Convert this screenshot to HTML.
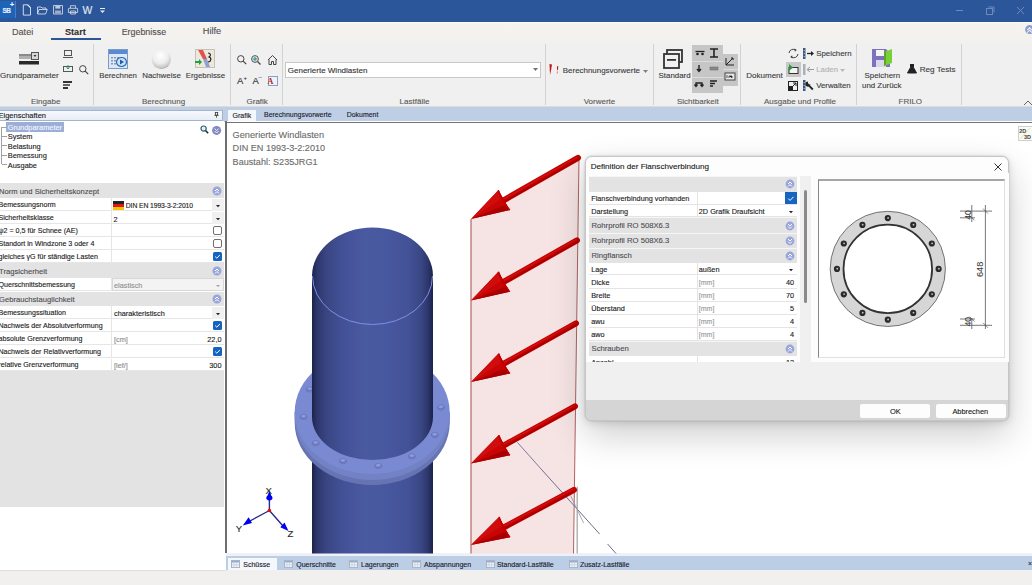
<!DOCTYPE html>
<html><head><meta charset="utf-8"><style>
html,body{margin:0;padding:0;width:1032px;height:585px;overflow:hidden;background:#fff;}
body{position:relative;font-family:"Liberation Sans",sans-serif;}
.t{position:absolute;white-space:nowrap;-webkit-text-stroke:0.12px currentColor;}
.r{position:absolute;}
.s{position:absolute;overflow:visible;}
</style></head><body>
<div class="r" style="left:0px;top:0px;width:1032px;height:22px;background:#2b579a;"></div>
<div class="r" style="left:0px;top:22px;width:1032px;height:1px;background:#fafafa;"></div>
<div class="r" style="left:0px;top:1px;width:16px;height:17px;background:#1f63b9;border-right:1px solid #4a7fc8;box-sizing:border-box;"></div>
<div class="t" style="left:2.50px;top:7.70px;font-size:6.5px;line-height:6.5px;color:#e8f0ff;font-weight:bold;letter-spacing:-0.5px;">SB</div>
<div class="t" style="left:10.00px;top:1.27px;font-size:7px;line-height:7px;color:#ffffff;font-weight:bold;">+</div>
<svg class="s" style="left:22px;top:4px;" width="10" height="12" viewBox="0 0 10 12"><path d="M1.3 0.8h4.6l2.6 2.6v7.7h-7.2z" fill="none" stroke="#dfe6f2" stroke-width="0.9"/><path d="M5.6 0.8l3 3" stroke="#dfe6f2" stroke-width="1.2"/></svg>
<svg class="s" style="left:37px;top:6px;" width="11" height="9" viewBox="0 0 11 9"><path d="M0.5 1h3.5l1 1h4v1.5 M0.5 1v7h8l1.8-4.5h-8.3l-1.5 4.5" fill="none" stroke="#d2d9e6" stroke-width="0.9"/></svg>
<svg class="s" style="left:52.5px;top:5px;" width="10" height="9.5" viewBox="0 0 10 9.5"><path d="M0.5 0.5h9v8.5h-9z" fill="none" stroke="#c8d0de" stroke-width="0.9"/><rect x="2.3" y="1" width="5" height="2.6" fill="#c0c8d8"/><rect x="2" y="5.5" width="6" height="3.2" fill="#a0acc4"/></svg>
<svg class="s" style="left:67.5px;top:5px;" width="10" height="9.5" viewBox="0 0 10 9.5"><path d="M2.5 3.3v-2.6h5v2.6 M1 3.3h8a0.6 0.6 0 0 1 0.6 0.6v3.6h-9.2v-3.6a0.6 0.6 0 0 1 0.6-0.6z M2.5 6h5v3h-5z" fill="none" stroke="#c8d0de" stroke-width="0.9"/></svg>
<div class="t" style="left:82.60px;top:6.00px;font-size:10.4px;line-height:10.4px;color:#e4e9f2;">W</div>
<svg class="s" style="left:100px;top:8px;" width="6" height="6" viewBox="0 0 6 6"><rect x="0" y="0" width="5" height="1" fill="#e6ecf6"/><path d="M0 2.5h5l-2.5 2.5z" fill="#e6ecf6"/></svg>
<div class="r" style="left:956px;top:10px;width:7px;height:1px;background:#6d8abb;"></div>
<svg class="s" style="left:985px;top:6px;" width="10" height="9" viewBox="0 0 10 9"><rect x="1.5" y="2.5" width="6" height="6" fill="none" stroke="#6d8abb"/><path d="M3.5 1h5.5v5.5" fill="none" stroke="#6d8abb"/></svg>
<svg class="s" style="left:1016px;top:6px;" width="9" height="9" viewBox="0 0 9 9"><path d="M1 1l7 7M8 1l-7 7" stroke="#6d8abb" stroke-width="1"/></svg>
<div class="r" style="left:0px;top:23px;width:1032px;height:22px;background:linear-gradient(#f5f3f0 0,#f4f2ef 70%,#f0f0f0 100%);"></div>
<div class="t" style="left:12.00px;top:27.50px;font-size:9.1px;line-height:9.1px;color:#505050;">Datei</div>
<div class="t" style="left:65.00px;top:27.50px;font-size:9.1px;line-height:9.1px;color:#303030;font-weight:bold;">Start</div>
<div class="r" style="left:51px;top:38.4px;width:50px;height:2px;background:#2b579a;"></div>
<div class="t" style="left:121.70px;top:27.67px;font-size:8.9px;line-height:8.9px;color:#505050;">Ergebnisse</div>
<div class="t" style="left:202.80px;top:27.41px;font-size:9.2px;line-height:9.2px;color:#505050;">Hilfe</div>
<svg class="s" style="left:1024.5px;top:25px;" width="10" height="10" viewBox="0 0 10 10"><circle cx="4.6" cy="4.6" r="4.5" fill="#8e9ccc"/><path d="M2.2 5.2l2.4-2.4 2.4 2.4M2.2 7.6l2.4-2.4 2.4 2.4" fill="none" stroke="#eef0fa" stroke-width="1.1"/></svg>
<div class="r" style="left:0px;top:45px;width:1032px;height:62px;background:#f0f0f0;"></div>
<div class="r" style="left:0px;top:106px;width:1032px;height:1px;background:#dcdcdc;"></div>
<div class="r" style="left:93px;top:44px;width:1px;height:61px;background:#d2d2d2;"></div>
<div class="r" style="left:230px;top:44px;width:1px;height:61px;background:#d2d2d2;"></div>
<div class="r" style="left:282px;top:44px;width:1px;height:61px;background:#d2d2d2;"></div>
<div class="r" style="left:545px;top:44px;width:1px;height:61px;background:#d2d2d2;"></div>
<div class="r" style="left:653px;top:44px;width:1px;height:61px;background:#d2d2d2;"></div>
<div class="r" style="left:740px;top:44px;width:1px;height:61px;background:#d2d2d2;"></div>
<div class="r" style="left:856px;top:44px;width:1px;height:61px;background:#d2d2d2;"></div>
<div class="r" style="left:961px;top:44px;width:1px;height:61px;background:#d2d2d2;"></div>
<div class="t" style="left:31.00px;top:98.23px;font-size:8px;line-height:8px;color:#5a5a5a;">Eingabe</div>
<div class="t" style="left:142.00px;top:98.23px;font-size:8px;line-height:8px;color:#5a5a5a;">Berechnung</div>
<div class="t" style="left:246.50px;top:98.23px;font-size:8px;line-height:8px;color:#5a5a5a;">Grafik</div>
<div class="t" style="left:399.60px;top:98.23px;font-size:8px;line-height:8px;color:#5a5a5a;">Lastfälle</div>
<div class="t" style="left:583.70px;top:98.23px;font-size:8px;line-height:8px;color:#5a5a5a;">Vorwerte</div>
<div class="t" style="left:677.00px;top:98.23px;font-size:8px;line-height:8px;color:#5a5a5a;">Sichtbarkeit</div>
<div class="t" style="left:764.00px;top:98.23px;font-size:8px;line-height:8px;color:#5a5a5a;">Ausgabe und Profile</div>
<div class="t" style="left:898.50px;top:98.23px;font-size:8px;line-height:8px;color:#5a5a5a;">FRILO</div>
<svg class="s" style="left:19px;top:52px;" width="21" height="14" viewBox="0 0 21 14"><rect x="0" y="2" width="15" height="5" fill="#8a8a8a"/><rect x="0" y="4" width="15" height="3" fill="#b0b0b0"/><rect x="0" y="9" width="20" height="3.5" fill="#2a2a2a"/><rect x="12.5" y="0.5" width="7" height="7" fill="#d8d8d8" stroke="#555"/><path d="M14.5 3h3l-1.5 2z" fill="#333"/></svg>
<div class="t" style="left:0.00px;top:71.83px;font-size:8px;line-height:8px;color:#3c3c3c;">Grundparameter</div>
<svg class="s" style="left:63px;top:50px;" width="10" height="8" viewBox="0 0 10 8"><rect x="1.5" y="0.5" width="7" height="5" fill="none" stroke="#555"/><path d="M0 7.5h10" stroke="#555"/></svg>
<svg class="s" style="left:63px;top:65px;" width="10" height="7" viewBox="0 0 10 7"><rect x="0.5" y="1.5" width="9" height="5" fill="none" stroke="#555"/><path d="M5 0v4M3.5 2.5l1.5 1.5 1.5-1.5" stroke="#1a9a8a" fill="none"/></svg>
<svg class="s" style="left:63px;top:81px;" width="10" height="9" viewBox="0 0 10 9"><rect x="0" y="0" width="9" height="2" fill="#333"/><rect x="0" y="3" width="7" height="2" fill="#666"/><rect x="0" y="6" width="5" height="2" fill="#333"/></svg>
<svg class="s" style="left:79px;top:65px;" width="10" height="10" viewBox="0 0 10 10"><circle cx="3.8" cy="3.8" r="3.2" fill="none" stroke="#444" stroke-width="1"/><path d="M6.2 6.2l3 3" stroke="#444" stroke-width="1.2"/></svg>
<svg class="s" style="left:108px;top:49px;" width="21" height="20" viewBox="0 0 21 20"><rect x="0.5" y="0.5" width="19" height="19" fill="#dde8f6" stroke="#7a9ac8"/><rect x="1" y="1" width="18" height="4" fill="#5a8ad0"/><g fill="#8898b0"><rect x="3" y="8" width="2" height="1.5"/><rect x="6" y="8" width="2" height="1.5"/><rect x="9" y="8" width="2" height="1.5"/><rect x="3" y="11" width="2" height="1.5"/><rect x="6" y="11" width="2" height="1.5"/><rect x="3" y="14" width="2" height="1.5"/><rect x="6" y="14" width="2" height="1.5"/></g><ellipse cx="13.5" cy="13" rx="5" ry="4.5" fill="#cfe0f4" stroke="#2a6ab8" stroke-width="1.2"/><path d="M12 10.5v5l4-2.5z" fill="#1a5ab0"/></svg>
<div class="t" style="left:99.20px;top:71.90px;font-size:7.8px;line-height:7.8px;color:#3c3c3c;">Berechnen</div>
<svg class="s" style="left:151px;top:50px;" width="21" height="19" viewBox="0 0 21 19"><defs><radialGradient id="sph" cx="0.45" cy="0.3" r="0.75"><stop offset="0" stop-color="#ffffff"/><stop offset="0.55" stop-color="#ececec"/><stop offset="0.85" stop-color="#c4c4c4"/><stop offset="1" stop-color="#888"/></radialGradient></defs><circle cx="10.3" cy="9.5" r="9.6" fill="url(#sph)"/></svg>
<div class="t" style="left:142.20px;top:71.81px;font-size:7.9px;line-height:7.9px;color:#3c3c3c;">Nachweise</div>
<svg class="s" style="left:195px;top:49px;" width="21" height="20" viewBox="0 0 21 20"><rect x="0.5" y="0.5" width="19" height="18" fill="#ece8dc" stroke="#c8c0b0"/><path d="M3 1l5 0l4 9l-4 0z" fill="#e05050"/><path d="M8 10l4 0l3 8l-4 0z" fill="#8aa4d0"/><path d="M13 4c3 0 3 3 1 4c3 1 2 5-1 5" fill="none" stroke="#222" stroke-width="1.2"/><path d="M0 12h4v-2l3 3-3 3v-2h-4z" fill="#20a040"/></svg>
<div class="t" style="left:185.70px;top:71.81px;font-size:7.9px;line-height:7.9px;color:#3c3c3c;">Ergebnisse</div>
<svg class="s" style="left:237px;top:55px;" width="10" height="10" viewBox="0 0 10 10"><circle cx="3.8" cy="3.8" r="3.2" fill="none" stroke="#444"/><path d="M6.2 6.2l3 3" stroke="#444" stroke-width="1.2"/></svg>
<svg class="s" style="left:251px;top:55px;" width="11" height="10" viewBox="0 0 11 10"><circle cx="4" cy="4" r="3.4" fill="#d8e4e4" stroke="#555"/><path d="M6.5 6.5l3 3" stroke="#444" stroke-width="1.2"/><path d="M4 2v4M2 4h4" stroke="#2a8a8a"/></svg>
<svg class="s" style="left:267px;top:55px;" width="11" height="10" viewBox="0 0 11 10"><path d="M1 5l4.5-4.5 4.5 4.5M2 4.5v5h2.5v-3h2v3h2.5v-5" fill="none" stroke="#444" stroke-width="1"/></svg>
<div class="t" style="left:237.00px;top:76.46px;font-size:9.5px;line-height:9.5px;color:#333;">A</div>
<div class="t" style="left:243.50px;top:74.92px;font-size:6px;line-height:6px;color:#333;">+</div>
<div class="t" style="left:252.50px;top:76.46px;font-size:9.5px;line-height:9.5px;color:#333;">A</div>
<div class="t" style="left:258.50px;top:74.42px;font-size:6px;line-height:6px;color:#333;">–</div>
<svg class="s" style="left:267px;top:76px;" width="11" height="10" viewBox="0 0 11 10"><rect x="1.5" y="0.5" width="9" height="9" fill="#eef2f8" stroke="#8aa0c0"/><text x="0.5" y="8" font-family="Liberation Serif" font-weight="bold" font-size="8" fill="#c02020">A</text></svg>
<div class="r" style="left:285px;top:62px;width:256px;height:16px;background:#ffffff;border:1px solid #c8c8c8;box-sizing:border-box;"></div>
<div class="t" style="left:287.80px;top:66.63px;font-size:8px;line-height:8px;color:#333;">Generierte Windlasten</div>
<svg class="s" style="left:533px;top:68px;" width="6" height="4" viewBox="0 0 6 4"><path d="M0 0h5l-2.5 3z" fill="#707070"/></svg>
<svg class="s" style="left:549px;top:63px;" width="12" height="12" viewBox="0 0 12 12"><path d="M0.5 1l2.5 0.5-0.8 5-1.2 5.5z" fill="#c01818"/><path d="M8 3.5l1.3-0.5-0.3 3.5-1 1z" fill="#c01818"/><path d="M8 8.5l0.6 0-0.3 2-0.5 0z" fill="#c01818"/></svg>
<div class="t" style="left:562.80px;top:66.67px;font-size:7.95px;line-height:7.95px;color:#3c3c3c;">Berechnungsvorwerte</div>
<svg class="s" style="left:643px;top:70px;" width="6" height="4" viewBox="0 0 6 4"><path d="M0 0h5l-2.5 3z" fill="#808080"/></svg>
<svg class="s" style="left:663px;top:49px;" width="22" height="21" viewBox="0 0 22 21"><rect x="4" y="1" width="15" height="12" fill="none" stroke="#333" stroke-width="1.8"/><rect x="1" y="5" width="15" height="14" fill="#f0f0f0" stroke="#333" stroke-width="1.8"/><rect x="4" y="10" width="9" height="1.8" fill="#333"/></svg>
<div class="t" style="left:658.60px;top:71.91px;font-size:7.9px;line-height:7.9px;color:#3c3c3c;">Standard</div>
<div class="r" style="left:692px;top:45px;width:31px;height:48px;background:#c6c6c6;"></div>
<div class="r" style="left:723px;top:54px;width:15px;height:32px;background:#c6c6c6;"></div>
<div class="r" style="left:692px;top:61px;width:31px;height:1px;background:#dcdcdc;"></div>
<div class="r" style="left:692px;top:77px;width:31px;height:1px;background:#dcdcdc;"></div>
<div class="r" style="left:723px;top:69px;width:15px;height:1px;background:#dcdcdc;"></div>
<svg class="s" style="left:692px;top:45px;" width="46" height="48" viewBox="0 0 46 48">
<path d="M3.5 6.5h9" stroke="#222" stroke-width="1.3"/><circle cx="5.5" cy="9" r="1.3" fill="#222"/><circle cx="10.5" cy="9" r="1.3" fill="#222"/>
<path d="M18 4h8M22 4v8M18 12h8" stroke="#222" stroke-width="1.6"/>
<path d="M7 20v6M5 24l2 2.5 2-2.5" fill="none" stroke="#222" stroke-width="1.4"/>
<rect x="18" y="22" width="8" height="3" fill="#888" stroke="#666" stroke-width="0.5"/>
<path d="M4 41v-3h6v3M2.5 39.5l1.5 2 1.5-2M8.5 39.5l1.5 2 1.5-2" fill="none" stroke="#222" stroke-width="1.3"/>
<path d="M18 36h7M18 38.5h5M18 41h3" stroke="#222" stroke-width="1.4"/>
<path d="M34 13v7h8M34 20l7-7M39 13h2v2" fill="none" stroke="#222" stroke-width="1"/>
<rect x="33" y="28" width="10" height="7" fill="#e8e8e8" stroke="#444"/><path d="M35 30v3M37 31h3v2M37 31v2" stroke="#333" stroke-width="0.8"/>
</svg>
<div class="t" style="left:746.30px;top:71.73px;font-size:8px;line-height:8px;color:#3c3c3c;">Dokument</div>
<svg class="s" style="left:788px;top:48px;" width="11" height="11" viewBox="0 0 11 11"><path d="M7.8 2.2A4.2 4.2 0 0 0 1 5M3.2 8.8A4.2 4.2 0 0 0 10 6" fill="none" stroke="#444" stroke-width="1"/><path d="M6.5 0.5l2.3 1.5-2 1.8z" fill="#444"/><path d="M4.5 10.5l-2.3-1.5 2-1.8z" fill="#444"/></svg>
<div class="r" style="left:786px;top:62px;width:15px;height:15px;background:#c8c8c8;"></div>
<svg class="s" style="left:788px;top:64px;" width="11" height="11" viewBox="0 0 11 11"><rect x="1" y="3.5" width="9" height="6" fill="#f4f4f4" stroke="#333"/><path d="M1 0v7l4-3.5z" fill="#2a9a3a"/></svg>
<svg class="s" style="left:788px;top:81px;" width="10" height="10" viewBox="0 0 10 10"><rect x="0.5" y="0.5" width="9" height="9" fill="none" stroke="#222"/><rect x="1" y="5" width="4" height="4" fill="#222"/><path d="M4 6l4-4M5 2h3v3" stroke="#222" fill="none"/></svg>
<svg class="s" style="left:803px;top:48px;" width="12" height="11" viewBox="0 0 12 11"><rect x="0" y="0" width="2.5" height="11" fill="#3a5a7a"/><rect x="0.7" y="2" width="1.1" height="1.1" fill="#a8c0d8"/><rect x="0.7" y="5" width="1.1" height="1.1" fill="#a8c0d8"/><rect x="0.7" y="8" width="1.1" height="1.1" fill="#a8c0d8"/><path d="M4 5.5h5" stroke="#222" stroke-width="1.3"/><path d="M8 3l3 2.5-3 2.5z" fill="#222"/></svg>
<div class="t" style="left:816.20px;top:50.35px;font-size:7.85px;line-height:7.85px;color:#3c3c3c;">Speichern</div>
<svg class="s" style="left:803px;top:64px;" width="12" height="11" viewBox="0 0 12 11"><rect x="0" y="0" width="2.5" height="11" fill="#a8b0b8"/><path d="M5 5.5h6" stroke="#999" stroke-width="1"/><path d="M7 3l-3 2.5 3 2.5" fill="none" stroke="#999"/></svg>
<div class="t" style="left:816.20px;top:66.31px;font-size:7.9px;line-height:7.9px;color:#b4b4b4;">Laden</div>
<svg class="s" style="left:840px;top:69px;" width="6" height="4" viewBox="0 0 6 4"><path d="M0 0h5l-2.5 3z" fill="#b8b8b8"/></svg>
<svg class="s" style="left:803px;top:80px;" width="12" height="11" viewBox="0 0 12 11"><rect x="0" y="0" width="2.5" height="11" fill="#3a5a7a"/><rect x="0.7" y="2" width="1.1" height="1.1" fill="#a8c0d8"/><rect x="0.7" y="5" width="1.1" height="1.1" fill="#a8c0d8"/><rect x="0.7" y="8" width="1.1" height="1.1" fill="#a8c0d8"/><path d="M9.8 9.5L6 5.7" stroke="#222" stroke-width="1.8"/><path d="M4.5 1.5a2.6 2.6 0 1 0 3 3l-1.6-0.2-0.8-1-0.2-1.6z" fill="#222"/></svg>
<div class="t" style="left:816.20px;top:82.35px;font-size:7.85px;line-height:7.85px;color:#3c3c3c;">Verwalten</div>
<svg class="s" style="left:872px;top:48px;" width="21" height="20" viewBox="0 0 21 20"><path d="M0 1h14l4 4v14h-18z" fill="#8070c0"/><rect x="4" y="2" width="8" height="6" fill="#f4f4f4"/><rect x="4" y="12" width="10" height="7" fill="#d8d8e8"/><path d="M12 4l8-3v14l-8 3z" fill="#78d038"/><path d="M12 4l2-1v14l-2 1z" fill="#58a820"/></svg>
<div class="t" style="left:864.50px;top:71.91px;font-size:7.9px;line-height:7.9px;color:#3c3c3c;">Speichern</div>
<div class="t" style="left:862.00px;top:81.91px;font-size:7.9px;line-height:7.9px;color:#3c3c3c;">und Zurück</div>
<svg class="s" style="left:907px;top:64px;" width="10" height="10" viewBox="0 0 10 10"><path d="M3 0.5h4M3.5 0.5v3l-3 5.5h9l-3-5.5v-3" fill="#222" stroke="#222" stroke-width="1"/><path d="M3 5h4l2 3.5h-8z" fill="#222"/></svg>
<div class="t" style="left:919.70px;top:66.34px;font-size:8.1px;line-height:8.1px;color:#3c3c3c;">Reg Tests</div>
<svg class="s" style="left:1023px;top:100px;" width="10" height="6" viewBox="0 0 10 6"><path d="M1 5l4-4 4 4" fill="none" stroke="#666" stroke-width="1"/></svg>
<div class="r" style="left:0px;top:107px;width:226px;height:463px;background:#ffffff;"></div>
<div class="r" style="left:0px;top:107px;width:1032px;height:15px;background:#bdcee5;"></div>
<div class="r" style="left:-1px;top:109.5px;width:223.5px;height:11.2px;background:linear-gradient(#f6f8fc,#e8eef7);border:1px solid #a4b4cc;box-sizing:border-box;"></div>
<div class="t" style="left:-1.50px;top:112.05px;font-size:7.5px;line-height:7.5px;color:#1a1a1a;">Eigenschaften</div>
<svg class="s" style="left:214px;top:111.5px;" width="5" height="6" viewBox="0 0 5 6"><path d="M0.8 0.5h3.4M1.5 0.5v2.8h2v-2.8M0.3 3.3h4.4" stroke="#333" stroke-width="0.8" fill="none"/><path d="M2.5 3.3v2.5" stroke="#333" stroke-width="0.7"/></svg>
<div class="r" style="left:0px;top:121px;width:224px;height:62px;background:#ffffff;"></div>
<div class="r" style="left:6px;top:122px;width:58px;height:10px;background:#9aaed8;"></div>
<div class="t" style="left:7.80px;top:123.94px;font-size:7.4px;line-height:7.4px;color:#f4f6fb;">Grundparameter</div>
<div class="t" style="left:7.80px;top:133.04px;font-size:7.4px;line-height:7.4px;color:#202020;">System</div>
<div class="r" style="left:2px;top:135.5px;width:5px;height:1px;background:#a0a0a0;"></div>
<div class="t" style="left:7.80px;top:142.54px;font-size:7.4px;line-height:7.4px;color:#202020;">Belastung</div>
<div class="r" style="left:2px;top:145px;width:5px;height:1px;background:#a0a0a0;"></div>
<div class="t" style="left:7.80px;top:152.14px;font-size:7.4px;line-height:7.4px;color:#202020;">Bemessung</div>
<div class="r" style="left:2px;top:154.6px;width:5px;height:1px;background:#a0a0a0;"></div>
<div class="t" style="left:7.80px;top:161.74px;font-size:7.4px;line-height:7.4px;color:#202020;">Ausgabe</div>
<div class="r" style="left:2px;top:164.2px;width:5px;height:1px;background:#a0a0a0;"></div>
<div class="r" style="left:1px;top:127px;width:1px;height:37px;background:#a0a0a0;"></div>
<div class="r" style="left:2px;top:127px;width:4px;height:1px;background:#a0a0a0;"></div>
<svg class="s" style="left:199.5px;top:125px;" width="10" height="10" viewBox="0 0 10 10"><circle cx="3.6" cy="3.6" r="2.6" fill="#d8f6fa" stroke="#34606e" stroke-width="1.2"/><path d="M5.6 5.6l2.6 2.6" stroke="#1e2a30" stroke-width="1.5"/></svg>
<svg class="s" style="left:211.5px;top:125.5px;" width="10" height="10" viewBox="0 0 10 10"><circle cx="4.6" cy="4.4" r="4.5" fill="#8289c2"/><path d="M2.6 2.6l2 2 2-2M2.6 5l2 2 2-2" stroke="#f4f4fc" stroke-width="1" fill="none"/></svg>
<div class="r" style="left:0px;top:183px;width:224px;height:15.4px;background:#e3e3e3;"></div>
<div class="t" style="left:-1.00px;top:187.82px;font-size:7.65px;line-height:7.65px;color:#4e4e52;">Norm und Sicherheitskonzept</div>
<svg class="s" style="left:212px;top:186.2px;" width="10" height="10" viewBox="0 0 10 10"><circle cx="5" cy="5" r="4.5" fill="#98a6dc"/><path d="M3 5l2-2 2 2M3 7.5l2-2 2 2" stroke="#fff" stroke-width="1" fill="none"/></svg>
<div class="r" style="left:0px;top:198.4px;width:224px;height:13px;background:#ffffff;border-bottom:1px solid #e6e6e6;box-sizing:border-box;"></div>
<div class="r" style="left:111px;top:198.4px;width:1px;height:13px;background:#e6e6e6;"></div>
<div class="t" style="left:-1.50px;top:202.19px;font-size:7.1px;line-height:7.1px;color:#202020;">Bemessungsnorm</div>
<svg class="s" style="left:113px;top:201px;" width="11" height="9" viewBox="0 0 11 9"><rect x="0" y="0" width="11" height="3" fill="#222"/><rect x="0" y="3" width="11" height="3" fill="#dd1a1a"/><rect x="0" y="6" width="11" height="3" fill="#f4c400"/></svg>
<div class="t" style="left:125.80px;top:202.54px;font-size:6.8px;line-height:6.8px;color:#202020;letter-spacing:-0.1px;">DIN EN 1993-3-2:2010</div>
<div class="r" style="left:212px;top:199px;width:12px;height:12px;background:#f0f0f0;"></div>
<svg class="s" style="left:216.0px;top:204.5px;" width="4" height="3" viewBox="0 0 4 3"><path d="M0 0h4l-2 2.2z" fill="#222"/></svg>
<div class="r" style="left:0px;top:211.4px;width:224px;height:13px;background:#ffffff;border-bottom:1px solid #e6e6e6;box-sizing:border-box;"></div>
<div class="r" style="left:111px;top:211.4px;width:1px;height:13px;background:#e6e6e6;"></div>
<div class="t" style="left:-1.50px;top:215.19px;font-size:7.1px;line-height:7.1px;color:#202020;">Sicherheitsklasse</div>
<div class="t" style="left:113.50px;top:215.62px;font-size:7.3px;line-height:7.3px;color:#202020;">2</div>
<div class="r" style="left:212px;top:212px;width:12px;height:12px;background:#f0f0f0;"></div>
<svg class="s" style="left:216.0px;top:217.5px;" width="4" height="3" viewBox="0 0 4 3"><path d="M0 0h4l-2 2.2z" fill="#222"/></svg>
<div class="r" style="left:0px;top:224.4px;width:224px;height:13px;background:#ffffff;border-bottom:1px solid #e6e6e6;box-sizing:border-box;"></div>
<div class="r" style="left:111px;top:224.4px;width:1px;height:13px;background:#e6e6e6;"></div>
<div class="t" style="left:-1.50px;top:228.19px;font-size:7.1px;line-height:7.1px;color:#202020;">ψ2 = 0,5 für Schnee (AE)</div>
<svg class="s" style="left:212.5px;top:226px;" width="9" height="9" viewBox="0 0 9 9"><rect x="0.5" y="0.5" width="8" height="8" rx="1.5" fill="#fff" stroke="#707070"/></svg>
<div class="r" style="left:0px;top:237.4px;width:224px;height:12.7px;background:#ffffff;border-bottom:1px solid #e6e6e6;box-sizing:border-box;"></div>
<div class="r" style="left:111px;top:237.4px;width:1px;height:12.7px;background:#e6e6e6;"></div>
<div class="t" style="left:-1.50px;top:241.04px;font-size:7.1px;line-height:7.1px;color:#202020;">Standort in Windzone 3 oder 4</div>
<svg class="s" style="left:212.5px;top:239px;" width="9" height="9" viewBox="0 0 9 9"><rect x="0.5" y="0.5" width="8" height="8" rx="1.5" fill="#fff" stroke="#707070"/></svg>
<div class="r" style="left:0px;top:250.1px;width:224px;height:12.7px;background:#ffffff;border-bottom:1px solid #e6e6e6;box-sizing:border-box;"></div>
<div class="r" style="left:111px;top:250.1px;width:1px;height:12.7px;background:#e6e6e6;"></div>
<div class="t" style="left:-1.50px;top:253.74px;font-size:7.1px;line-height:7.1px;color:#202020;">gleiches γG für ständige Lasten</div>
<svg class="s" style="left:212.5px;top:252px;" width="9" height="9" viewBox="0 0 9 9"><rect x="0" y="0" width="9" height="9" rx="1.5" fill="#1565c0"/><path d="M2.2 4.6l1.6 1.6 3-3.2" stroke="#fff" stroke-width="1" fill="none"/></svg>
<div class="r" style="left:0px;top:262.8px;width:224px;height:15.6px;background:#e3e3e3;"></div>
<div class="t" style="left:-1.00px;top:267.72px;font-size:7.65px;line-height:7.65px;color:#4e4e52;">Tragsicherheit</div>
<svg class="s" style="left:212px;top:266.1px;" width="10" height="10" viewBox="0 0 10 10"><circle cx="5" cy="5" r="4.5" fill="#98a6dc"/><path d="M3 5l2-2 2 2M3 7.5l2-2 2 2" stroke="#fff" stroke-width="1" fill="none"/></svg>
<div class="r" style="left:0px;top:278.4px;width:224px;height:13.1px;background:#ffffff;border-bottom:1px solid #e6e6e6;box-sizing:border-box;"></div>
<div class="r" style="left:111px;top:278.4px;width:1px;height:13.1px;background:#e6e6e6;"></div>
<div class="t" style="left:-1.50px;top:282.24px;font-size:7.1px;line-height:7.1px;color:#202020;">Querschnittsbemessung</div>
<div class="r" style="left:111.5px;top:278.4px;width:112.5px;height:13.1px;background:#f3f3f3;border:1px solid #d8d8d8;box-sizing:border-box;"></div>
<div class="t" style="left:114.00px;top:282.12px;font-size:7.3px;line-height:7.3px;color:#909090;">elastisch</div>
<svg class="s" style="left:216px;top:285px;" width="5" height="3" viewBox="0 0 5 3"><path d="M0 0h4l-2 2z" fill="#a0a0a0"/></svg>
<div class="r" style="left:0px;top:291.5px;width:224px;height:14.9px;background:#e3e3e3;"></div>
<div class="t" style="left:-1.00px;top:296.07px;font-size:7.65px;line-height:7.65px;color:#4e4e52;">Gebrauchstauglichkeit</div>
<svg class="s" style="left:212px;top:294.45px;" width="10" height="10" viewBox="0 0 10 10"><circle cx="5" cy="5" r="4.5" fill="#98a6dc"/><path d="M3 5l2-2 2 2M3 7.5l2-2 2 2" stroke="#fff" stroke-width="1" fill="none"/></svg>
<div class="r" style="left:0px;top:306.4px;width:224px;height:12.9px;background:#ffffff;border-bottom:1px solid #e6e6e6;box-sizing:border-box;"></div>
<div class="r" style="left:111px;top:306.4px;width:1px;height:12.9px;background:#e6e6e6;"></div>
<div class="t" style="left:-1.50px;top:310.14px;font-size:7.1px;line-height:7.1px;color:#202020;">Bemessungssituation</div>
<div class="t" style="left:114.00px;top:310.12px;font-size:7.3px;line-height:7.3px;color:#202020;">charakteristisch</div>
<div class="r" style="left:212px;top:307px;width:12px;height:12px;background:#f0f0f0;"></div>
<svg class="s" style="left:216.0px;top:312.5px;" width="4" height="3" viewBox="0 0 4 3"><path d="M0 0h4l-2 2.2z" fill="#222"/></svg>
<div class="r" style="left:0px;top:319.3px;width:224px;height:12.9px;background:#ffffff;border-bottom:1px solid #e6e6e6;box-sizing:border-box;"></div>
<div class="r" style="left:111px;top:319.3px;width:1px;height:12.9px;background:#e6e6e6;"></div>
<div class="t" style="left:-1.50px;top:323.04px;font-size:7.1px;line-height:7.1px;color:#202020;">Nachweis der Absolutverformung</div>
<svg class="s" style="left:212.5px;top:321px;" width="9" height="9" viewBox="0 0 9 9"><rect x="0" y="0" width="9" height="9" rx="1.5" fill="#1565c0"/><path d="M2.2 4.6l1.6 1.6 3-3.2" stroke="#fff" stroke-width="1" fill="none"/></svg>
<div class="r" style="left:0px;top:332.2px;width:224px;height:13.1px;background:#ffffff;border-bottom:1px solid #e6e6e6;box-sizing:border-box;"></div>
<div class="r" style="left:111px;top:332.2px;width:1px;height:13.1px;background:#e6e6e6;"></div>
<div class="t" style="left:-1.50px;top:336.04px;font-size:7.1px;line-height:7.1px;color:#202020;">absolute Grenzverformung</div>
<div class="t" style="left:114.00px;top:336.12px;font-size:7.3px;line-height:7.3px;color:#8a8a8a;">[cm]</div>
<div class="t" style="right:810.50px;top:336.12px;font-size:7.3px;line-height:7.3px;color:#202020;">22,0</div>
<div class="r" style="left:0px;top:345.3px;width:224px;height:13.2px;background:#ffffff;border-bottom:1px solid #e6e6e6;box-sizing:border-box;"></div>
<div class="r" style="left:111px;top:345.3px;width:1px;height:13.2px;background:#e6e6e6;"></div>
<div class="t" style="left:-1.50px;top:349.19px;font-size:7.1px;line-height:7.1px;color:#202020;">Nachweis der Relativverformung</div>
<svg class="s" style="left:212.5px;top:347px;" width="9" height="9" viewBox="0 0 9 9"><rect x="0" y="0" width="9" height="9" rx="1.5" fill="#1565c0"/><path d="M2.2 4.6l1.6 1.6 3-3.2" stroke="#fff" stroke-width="1" fill="none"/></svg>
<div class="r" style="left:0px;top:358.5px;width:224px;height:12.8px;background:#ffffff;border-bottom:1px solid #e6e6e6;box-sizing:border-box;"></div>
<div class="r" style="left:111px;top:358.5px;width:1px;height:12.8px;background:#e6e6e6;"></div>
<div class="t" style="left:-1.50px;top:362.19px;font-size:7.1px;line-height:7.1px;color:#202020;">relative Grenzverformung</div>
<div class="t" style="left:114.00px;top:362.12px;font-size:7.3px;line-height:7.3px;color:#8a8a8a;">[lef/]</div>
<div class="t" style="right:810.50px;top:362.12px;font-size:7.3px;line-height:7.3px;color:#202020;">300</div>
<div class="r" style="left:0px;top:371.3px;width:224px;height:135.7px;background:#e3e3e3;"></div>
<div class="r" style="left:228px;top:109.7px;width:28px;height:11.3px;background:#f4f7fb;"></div>
<div class="t" style="left:232.60px;top:111.77px;font-size:7px;line-height:7px;color:#1a1a1a;">Grafik</div>
<div class="t" style="left:264.00px;top:111.82px;font-size:6.95px;line-height:6.95px;color:#1a1a2a;">Berechnungsvorwerte</div>
<div class="t" style="left:346.70px;top:111.82px;font-size:6.95px;line-height:6.95px;color:#1a1a2a;">Dokument</div>
<div class="r" style="left:226px;top:121px;width:806px;height:432px;background:#ffffff;"></div>
<div class="r" style="left:225px;top:122px;width:807px;height:1.3px;background:#747474;"></div>
<div class="r" style="left:225px;top:121px;width:1.8px;height:432px;background:#6e6e6e;"></div>
<div class="t" style="left:232.60px;top:130.51px;font-size:9.2px;line-height:9.2px;color:#6c6c6c;">Generierte Windlasten</div>
<div class="t" style="left:232.60px;top:144.10px;font-size:9.1px;line-height:9.1px;color:#6c6c6c;">DIN EN 1993-3-2:2010</div>
<div class="t" style="left:232.60px;top:157.60px;font-size:9.1px;line-height:9.1px;color:#6c6c6c;">Baustahl: S235JRG1</div>
<div class="r" style="left:226px;top:553px;width:806px;height:17.5px;background:#bccde6;"></div>
<div class="r" style="left:226px;top:553px;width:806px;height:3px;background:#eef2f8;"></div>
<div class="r" style="left:228px;top:558px;width:49px;height:12px;background:#f4f7fb;"></div>
<svg class="s" style="left:231px;top:559.5px;" width="9" height="8" viewBox="0 0 9 8"><rect x="0.5" y="0.5" width="8" height="7" fill="#eef1f6" stroke="#a8b4c8"/><rect x="1" y="1" width="7" height="1.5" fill="#98acd0"/><path d="M3 2.5v5M5.5 2.5v5M1 4.8h7" stroke="#c0c8d8" stroke-width="0.6"/></svg>
<div class="t" style="left:243.30px;top:560.57px;font-size:7px;line-height:7px;color:#1a1a2a;">Schüsse</div>
<svg class="s" style="left:283.6px;top:559.5px;" width="9" height="8" viewBox="0 0 9 8"><rect x="0.5" y="0.5" width="8" height="7" fill="#eef1f6" stroke="#a8b4c8"/><rect x="1" y="1" width="7" height="1.5" fill="#98acd0"/><path d="M3 2.5v5M5.5 2.5v5M1 4.8h7" stroke="#c0c8d8" stroke-width="0.6"/></svg>
<div class="t" style="left:296.20px;top:560.57px;font-size:7px;line-height:7px;color:#1a1a2a;">Querschnitte</div>
<svg class="s" style="left:348.5px;top:559.5px;" width="9" height="8" viewBox="0 0 9 8"><rect x="0.5" y="0.5" width="8" height="7" fill="#eef1f6" stroke="#a8b4c8"/><rect x="1" y="1" width="7" height="1.5" fill="#98acd0"/><path d="M3 2.5v5M5.5 2.5v5M1 4.8h7" stroke="#c0c8d8" stroke-width="0.6"/></svg>
<div class="t" style="left:361.00px;top:560.57px;font-size:7px;line-height:7px;color:#1a1a2a;">Lagerungen</div>
<svg class="s" style="left:411.5px;top:559.5px;" width="9" height="8" viewBox="0 0 9 8"><rect x="0.5" y="0.5" width="8" height="7" fill="#eef1f6" stroke="#a8b4c8"/><rect x="1" y="1" width="7" height="1.5" fill="#98acd0"/><path d="M3 2.5v5M5.5 2.5v5M1 4.8h7" stroke="#c0c8d8" stroke-width="0.6"/></svg>
<div class="t" style="left:424.00px;top:560.57px;font-size:7px;line-height:7px;color:#1a1a2a;">Abspannungen</div>
<svg class="s" style="left:485.5px;top:559.5px;" width="9" height="8" viewBox="0 0 9 8"><rect x="0.5" y="0.5" width="8" height="7" fill="#eef1f6" stroke="#a8b4c8"/><rect x="1" y="1" width="7" height="1.5" fill="#98acd0"/><path d="M3 2.5v5M5.5 2.5v5M1 4.8h7" stroke="#c0c8d8" stroke-width="0.6"/></svg>
<div class="t" style="left:496.90px;top:560.57px;font-size:7px;line-height:7px;color:#1a1a2a;">Standard-Lastfälle</div>
<svg class="s" style="left:568.9px;top:559.5px;" width="9" height="8" viewBox="0 0 9 8"><rect x="0.5" y="0.5" width="8" height="7" fill="#eef1f6" stroke="#a8b4c8"/><rect x="1" y="1" width="7" height="1.5" fill="#98acd0"/><path d="M3 2.5v5M5.5 2.5v5M1 4.8h7" stroke="#c0c8d8" stroke-width="0.6"/></svg>
<div class="t" style="left:579.90px;top:560.57px;font-size:7px;line-height:7px;color:#1a1a2a;">Zusatz-Lastfälle</div>
<div class="t" style="left:1028.00px;top:559.87px;font-size:7px;line-height:7px;color:#333;">×</div>
<div class="r" style="left:0px;top:570.4px;width:1032px;height:15px;background:#f1f0ee;"></div>
<div class="r" style="left:0px;top:569.8px;width:226px;height:1px;background:#dedede;"></div>
<svg class="s" style="left:0;top:0" width="1032" height="585" viewBox="0 0 1032 585"><defs>
<linearGradient id="pipeg" x1="0" x2="1" y1="0" y2="0">
<stop offset="0" stop-color="#1c2246"/><stop offset="0.04" stop-color="#2c366c"/><stop offset="0.12" stop-color="#3a4682"/><stop offset="0.28" stop-color="#44529a"/><stop offset="0.45" stop-color="#4a5aa0"/><stop offset="0.62" stop-color="#4858a0"/><stop offset="0.8" stop-color="#435196"/><stop offset="0.9" stop-color="#3a4784"/><stop offset="0.96" stop-color="#2c366c"/><stop offset="1" stop-color="#1c2246"/>
</linearGradient>
<linearGradient id="pipein" x1="0" x2="1" y1="0" y2="0">
<stop offset="0" stop-color="#3a4a96"/><stop offset="0.3" stop-color="#4a5aaa"/><stop offset="0.7" stop-color="#4656a4"/><stop offset="1" stop-color="#34428a"/>
</linearGradient>
</defs><rect x="312" y="440" width="121" height="113.5" fill="url(#pipeg)"/><path d="M294.7 412 v11 A77.5 62 0 0 0 449.7 423 v-11 z" fill="#6774b4"/><path d="M294.7 412 v6 A77.5 62 0 0 0 449.7 418 v-6 z" fill="#7282c4"/><ellipse cx="372.2" cy="412" rx="77.5" ry="62" fill="#7a8ad2"/><ellipse cx="440.9" cy="407.6" rx="3.6" ry="2.6" fill="#8090d6" stroke="#6470b0" stroke-width="0.7"/><path d="M437.4 407.1Q440.9 410.9 444.4 407.1" fill="none" stroke="#5a66a4" stroke-width="0.8"/><ellipse cx="440.9" cy="406.7" rx="1.8" ry="1.1" fill="#8c9ce0"/><ellipse cx="434.7" cy="435.1" rx="3.6" ry="2.6" fill="#8090d6" stroke="#6470b0" stroke-width="0.7"/><path d="M431.2 434.6Q434.7 438.4 438.2 434.6" fill="none" stroke="#5a66a4" stroke-width="0.8"/><ellipse cx="434.7" cy="434.2" rx="1.8" ry="1.1" fill="#8c9ce0"/><ellipse cx="411.8" cy="456.5" rx="3.6" ry="2.6" fill="#8090d6" stroke="#6470b0" stroke-width="0.7"/><path d="M408.3 456.0Q411.8 459.8 415.3 456.0" fill="none" stroke="#5a66a4" stroke-width="0.8"/><ellipse cx="411.8" cy="455.6" rx="1.8" ry="1.1" fill="#8c9ce0"/><ellipse cx="378.2" cy="466.1" rx="3.6" ry="2.6" fill="#8090d6" stroke="#6470b0" stroke-width="0.7"/><path d="M374.7 465.6Q378.2 469.4 381.7 465.6" fill="none" stroke="#5a66a4" stroke-width="0.8"/><ellipse cx="378.2" cy="465.2" rx="1.8" ry="1.1" fill="#8c9ce0"/><ellipse cx="343.0" cy="461.2" rx="3.6" ry="2.6" fill="#8090d6" stroke="#6470b0" stroke-width="0.7"/><path d="M339.5 460.7Q343.0 464.5 346.5 460.7" fill="none" stroke="#5a66a4" stroke-width="0.8"/><ellipse cx="343.0" cy="460.3" rx="1.8" ry="1.1" fill="#8c9ce0"/><ellipse cx="315.7" cy="443.3" rx="3.6" ry="2.6" fill="#8090d6" stroke="#6470b0" stroke-width="0.7"/><path d="M312.2 442.8Q315.7 446.6 319.2 442.8" fill="none" stroke="#5a66a4" stroke-width="0.8"/><ellipse cx="315.7" cy="442.4" rx="1.8" ry="1.1" fill="#8c9ce0"/><ellipse cx="303.5" cy="417.0" rx="3.6" ry="2.6" fill="#8090d6" stroke="#6470b0" stroke-width="0.7"/><path d="M300.0 416.5Q303.5 420.3 307.0 416.5" fill="none" stroke="#5a66a4" stroke-width="0.8"/><ellipse cx="303.5" cy="416.1" rx="1.8" ry="1.1" fill="#8c9ce0"/><ellipse cx="309.7" cy="389.5" rx="3.6" ry="2.6" fill="#8090d6" stroke="#6470b0" stroke-width="0.7"/><path d="M306.2 389.0Q309.7 392.8 313.2 389.0" fill="none" stroke="#5a66a4" stroke-width="0.8"/><ellipse cx="309.7" cy="388.6" rx="1.8" ry="1.1" fill="#8c9ce0"/><path d="M312 276 A60.5 48.5 0 0 1 433 276 V417 A60.5 43 0 0 1 312 417 Z" fill="url(#pipeg)"/><path d="M312.5 276 A60 48.5 0 0 0 432.5 276" fill="none" stroke="#7f90e6" stroke-width="1"/><polygon points="471,219 579,157 573.5,553.5 471,553.5" fill="#f6e4e4"/><path d="M471 219V553.5" stroke="#a84848" stroke-width="1"/><path d="M579 157L573.5 553.5" stroke="#a85050" stroke-width="0.9"/><path d="M542 470L599.6 534M607.6 544L616 553.5" stroke="#6e6e8a" stroke-width="1"/><path d="M517.4 442.4L542 470" stroke="#6e6e90" stroke-width="0.9"/><path d="M577.2 486.7V553.5" stroke="#a8a8a8" stroke-width="1.3"/><path d="M570.5 495.4L583.6 523" stroke="#9090a8" stroke-width="0.8"/><path d="M501.4 201.6L578.0 157.8" stroke="#c40000" stroke-width="6.0" stroke-linecap="round"/><path d="M504.8 201.5L578.8 159.2" stroke="#a00000" stroke-width="1.3"/><path d="M503.4 199.1L577.4 156.8" stroke="#d81010" stroke-width="1.2"/><polygon points="471.0,219.0 509.7,210.1 498.3,190.2" fill="#c80404"/><polygon points="471.0,219.0 509.7,210.1 506.6,204.6" fill="#a80000"/><polygon points="471.0,219.0 498.3,190.2 502.8,198.1" fill="#d00c0c"/><path d="M509.7 210.1Q501.8 201.4 498.3 190.2" stroke="#c00000" stroke-width="1.6" fill="#c00000"/><path d="M501.4 283.2L577.0 240.3" stroke="#c40000" stroke-width="6.0" stroke-linecap="round"/><path d="M504.8 283.1L577.8 241.7" stroke="#a00000" stroke-width="1.3"/><path d="M503.5 280.7L576.4 239.3" stroke="#d81010" stroke-width="1.2"/><polygon points="471.0,300.5 509.7,291.7 498.4,271.7" fill="#c80404"/><polygon points="471.0,300.5 509.7,291.7 506.6,286.2" fill="#a80000"/><polygon points="471.0,300.5 498.4,271.7 502.9,279.7" fill="#d00c0c"/><path d="M509.7 291.7Q501.9 283.0 498.4 271.7" stroke="#c00000" stroke-width="1.6" fill="#c00000"/><path d="M501.6 364.9L576.0 323.3" stroke="#c40000" stroke-width="6.0" stroke-linecap="round"/><path d="M504.9 364.9L576.8 324.7" stroke="#a00000" stroke-width="1.3"/><path d="M503.6 362.4L575.4 322.3" stroke="#d81010" stroke-width="1.2"/><polygon points="471.0,382.0 509.8,373.5 498.6,353.4" fill="#c80404"/><polygon points="471.0,382.0 509.8,373.5 506.7,368.0" fill="#a80000"/><polygon points="471.0,382.0 498.6,353.4 503.0,361.4" fill="#d00c0c"/><path d="M509.8 373.5Q502.0 364.7 498.6 353.4" stroke="#c00000" stroke-width="1.6" fill="#c00000"/><path d="M501.7 446.6L575.0 406.3" stroke="#c40000" stroke-width="6.0" stroke-linecap="round"/><path d="M505.1 446.6L575.8 407.7" stroke="#a00000" stroke-width="1.3"/><path d="M503.7 444.1L574.4 405.2" stroke="#d81010" stroke-width="1.2"/><polygon points="471.0,463.5 509.8,455.3 498.8,435.1" fill="#c80404"/><polygon points="471.0,463.5 509.8,455.3 506.8,449.7" fill="#a80000"/><polygon points="471.0,463.5 498.8,435.1 503.2,443.2" fill="#d00c0c"/><path d="M509.8 455.3Q502.1 446.4 498.8 435.1" stroke="#c00000" stroke-width="1.6" fill="#c00000"/><path d="M501.8 528.5L574.0 489.8" stroke="#c40000" stroke-width="6.0" stroke-linecap="round"/><path d="M505.2 528.5L574.8 491.2" stroke="#a00000" stroke-width="1.3"/><path d="M503.9 526.0L573.4 488.7" stroke="#d81010" stroke-width="1.2"/><polygon points="471.0,545.0 509.9,537.2 499.1,516.9" fill="#c80404"/><polygon points="471.0,545.0 509.9,537.2 506.9,531.6" fill="#a80000"/><polygon points="471.0,545.0 499.1,516.9 503.4,525.0" fill="#d00c0c"/><path d="M509.9 537.2Q502.3 528.2 499.1 516.9" stroke="#c00000" stroke-width="1.6" fill="#c00000"/><path d="M269.4 510.5V497M269.4 510.5L249 521.5M269.4 510.5L283 526" stroke="#2a2a8a" stroke-width="1.4"/><path d="M269.4 491l-3 7.5h6z" fill="#0000f0"/><ellipse cx="269.4" cy="498" rx="3" ry="2.4" fill="#0000f0"/><path d="M242.8 525.5l5.8-8.2 3.4 5.6z" fill="#0000f0"/><path d="M288.5 531l-8.2-3.8 4.2-4.8z" fill="#0000f0"/><circle cx="269.4" cy="510.5" r="1.8" fill="#e01010"/></svg>
<div class="t" style="left:265.60px;top:485.67px;font-size:9.6px;line-height:9.6px;color:#2a2a2a;">X</div>
<div class="t" style="left:235.80px;top:524.07px;font-size:9.6px;line-height:9.6px;color:#2a2a2a;">Y</div>
<div class="t" style="left:287.60px;top:529.37px;font-size:9.6px;line-height:9.6px;color:#2a2a2a;">Z</div>
<svg class="s" style="left:1018px;top:126px;" width="14" height="15" viewBox="0 0 14 15"><rect x="0.5" y="0.5" width="14" height="14" fill="#fafaf4" stroke="#d0d0d0"/><path d="M2 13L12 2" stroke="#e8e0b0" stroke-width="1"/><text x="1.2" y="6.5" font-size="5.5" font-weight="bold" fill="#444" font-family="Liberation Sans">2D</text><text x="6" y="13" font-size="5.5" font-weight="bold" fill="#444" font-family="Liberation Sans">3D</text></svg>
<div class="r" style="left:585px;top:155.5px;width:424px;height:265.5px;border-radius:7px;background:#f0f0f0;border:1px solid #c6c6c6;box-sizing:border-box;box-shadow:0 14px 36px rgba(0,0,0,0.20),0 2px 8px rgba(0,0,0,0.12),0 0 2px rgba(0,0,0,0.2);overflow:hidden;"><div class="r" style="left:0;top:0;width:424px;height:206px;background:#fdfdfd;"></div><div class="r" style="left:0;top:243px;width:424px;height:24px;background:#d5d5d5;"></div></div>
<div class="t" style="left:590.70px;top:163.14px;font-size:8.1px;line-height:8.1px;color:#1a1a1a;">Definition der Flanschverbindung</div>
<svg class="s" style="left:994px;top:162.5px;" width="8" height="8" viewBox="0 0 8 8"><path d="M0.5 0.5l7 7M7.5 0.5l-7 7" stroke="#333" stroke-width="1"/></svg>
<div class="r" style="left:589px;top:176px;width:207.5px;height:186px;background:#ffffff;"></div>
<div class="r" style="left:589px;top:176px;width:207.5px;height:15.6px;background:#e3e3e3;border-top:1px solid #f6f6f6;box-sizing:border-box;"></div>
<svg class="s" style="left:784.5px;top:179.3px;" width="10" height="10" viewBox="0 0 10 10"><circle cx="5" cy="5" r="4.4" fill="#98a6dc"/><path d="M3 5l2-2 2 2M3 7.5l2-2 2 2" stroke="#fff" stroke-width="1" fill="none"/></svg>
<div class="r" style="left:589px;top:191.6px;width:207.5px;height:13px;background:#ffffff;border-bottom:1px solid #e4e4e4;box-sizing:border-box;"></div>
<div class="r" style="left:696.5px;top:191.6px;width:1px;height:13px;background:#e4e4e4;"></div>
<div class="t" style="left:591.20px;top:195.12px;font-size:7.3px;line-height:7.3px;color:#1a1a1a;">Flanschverbindung vorhanden</div>
<svg class="s" style="left:785px;top:192px;" width="9" height="9" viewBox="0 0 9 9"><rect x="0" y="0" width="9" height="9" rx="1.5" fill="#1565c0"/><path d="M2.2 4.6l1.6 1.6 3-3.2" stroke="#fff" stroke-width="1" fill="none"/></svg>
<div class="r" style="left:785px;top:191.6px;width:11.5px;height:12.6px;background:#1565c0;"></div>
<svg class="s" style="left:785px;top:191.6px;" width="12" height="13" viewBox="0 0 12 13"><path d="M3.3 6.6l1.8 1.8 3.4-3.6" stroke="#fff" stroke-width="1" fill="none"/></svg>
<div class="r" style="left:589px;top:204.6px;width:207.5px;height:12.5px;background:#ffffff;border-bottom:1px solid #e4e4e4;box-sizing:border-box;"></div>
<div class="r" style="left:696.5px;top:204.6px;width:1px;height:12.5px;background:#e4e4e4;"></div>
<div class="t" style="left:591.20px;top:207.87px;font-size:7.3px;line-height:7.3px;color:#1a1a1a;">Darstellung</div>
<div class="t" style="left:698.80px;top:207.92px;font-size:7.3px;line-height:7.3px;color:#1a1a1a;">2D Grafik Draufsicht</div>
<svg class="s" style="left:789.0px;top:210.5px;" width="4" height="3" viewBox="0 0 4 3"><path d="M0 0h4l-2 2.2z" fill="#222"/></svg>
<div class="r" style="left:589px;top:217.1px;width:207.5px;height:15.8px;background:#e3e3e3;border-top:1px solid #f6f6f6;box-sizing:border-box;"></div>
<div class="t" style="left:591.50px;top:221.88px;font-size:7.7px;line-height:7.7px;color:#4e4e52;">Rohrprofil RO 508X6.3</div>
<svg class="s" style="left:784.5px;top:220.5px;" width="10" height="10" viewBox="0 0 10 10"><circle cx="5" cy="5" r="4.4" fill="#98a6dc"/><path d="M3 3l2 2 2-2M3 5.5l2 2 2-2" stroke="#fff" stroke-width="1" fill="none"/></svg>
<div class="r" style="left:589px;top:232.9px;width:207.5px;height:15.4px;background:#e3e3e3;border-top:1px solid #f6f6f6;box-sizing:border-box;"></div>
<div class="t" style="left:591.50px;top:237.48px;font-size:7.7px;line-height:7.7px;color:#4e4e52;">Rohrprofil RO 508X6.3</div>
<svg class="s" style="left:784.5px;top:236.1px;" width="10" height="10" viewBox="0 0 10 10"><circle cx="5" cy="5" r="4.4" fill="#98a6dc"/><path d="M3 3l2 2 2-2M3 5.5l2 2 2-2" stroke="#fff" stroke-width="1" fill="none"/></svg>
<div class="r" style="left:589px;top:248.3px;width:207.5px;height:14.5px;background:#e3e3e3;border-top:1px solid #f6f6f6;box-sizing:border-box;"></div>
<div class="t" style="left:591.50px;top:252.43px;font-size:7.7px;line-height:7.7px;color:#4e4e52;">Ringflansch</div>
<svg class="s" style="left:784.5px;top:251.05px;" width="10" height="10" viewBox="0 0 10 10"><circle cx="5" cy="5" r="4.4" fill="#98a6dc"/><path d="M3 5l2-2 2 2M3 7.5l2-2 2 2" stroke="#fff" stroke-width="1" fill="none"/></svg>
<div class="r" style="left:589px;top:262.8px;width:207.5px;height:12.7px;background:#ffffff;border-bottom:1px solid #e4e4e4;box-sizing:border-box;"></div>
<div class="r" style="left:696.5px;top:262.8px;width:1px;height:12.7px;background:#e4e4e4;"></div>
<div class="t" style="left:591.20px;top:266.17px;font-size:7.3px;line-height:7.3px;color:#1a1a1a;">Lage</div>
<div class="t" style="left:698.80px;top:266.22px;font-size:7.3px;line-height:7.3px;color:#1a1a1a;">außen</div>
<svg class="s" style="left:789.0px;top:268.5px;" width="4" height="3" viewBox="0 0 4 3"><path d="M0 0h4l-2 2.2z" fill="#222"/></svg>
<div class="r" style="left:589px;top:275.5px;width:207.5px;height:13px;background:#ffffff;border-bottom:1px solid #e4e4e4;box-sizing:border-box;"></div>
<div class="r" style="left:696.5px;top:275.5px;width:1px;height:13px;background:#e4e4e4;"></div>
<div class="t" style="left:591.20px;top:279.02px;font-size:7.3px;line-height:7.3px;color:#1a1a1a;">Dicke</div>
<div class="t" style="left:698.80px;top:278.87px;font-size:7px;line-height:7px;color:#9a9a9a;">[mm]</div>
<div class="t" style="right:238.00px;top:279.02px;font-size:7.3px;line-height:7.3px;color:#1a1a1a;">40</div>
<div class="r" style="left:589px;top:288.5px;width:207.5px;height:13px;background:#ffffff;border-bottom:1px solid #e4e4e4;box-sizing:border-box;"></div>
<div class="r" style="left:696.5px;top:288.5px;width:1px;height:13px;background:#e4e4e4;"></div>
<div class="t" style="left:591.20px;top:292.02px;font-size:7.3px;line-height:7.3px;color:#1a1a1a;">Breite</div>
<div class="t" style="left:698.80px;top:291.87px;font-size:7px;line-height:7px;color:#9a9a9a;">[mm]</div>
<div class="t" style="right:238.00px;top:292.02px;font-size:7.3px;line-height:7.3px;color:#1a1a1a;">70</div>
<div class="r" style="left:589px;top:301.5px;width:207.5px;height:13px;background:#ffffff;border-bottom:1px solid #e4e4e4;box-sizing:border-box;"></div>
<div class="r" style="left:696.5px;top:301.5px;width:1px;height:13px;background:#e4e4e4;"></div>
<div class="t" style="left:591.20px;top:305.02px;font-size:7.3px;line-height:7.3px;color:#1a1a1a;">Überstand</div>
<div class="t" style="left:698.80px;top:304.87px;font-size:7px;line-height:7px;color:#9a9a9a;">[mm]</div>
<div class="t" style="right:238.00px;top:305.02px;font-size:7.3px;line-height:7.3px;color:#1a1a1a;">5</div>
<div class="r" style="left:589px;top:314.5px;width:207.5px;height:13px;background:#ffffff;border-bottom:1px solid #e4e4e4;box-sizing:border-box;"></div>
<div class="r" style="left:696.5px;top:314.5px;width:1px;height:13px;background:#e4e4e4;"></div>
<div class="t" style="left:591.20px;top:318.02px;font-size:7.3px;line-height:7.3px;color:#1a1a1a;">awu</div>
<div class="t" style="left:698.80px;top:317.87px;font-size:7px;line-height:7px;color:#9a9a9a;">[mm]</div>
<div class="t" style="right:238.00px;top:318.02px;font-size:7.3px;line-height:7.3px;color:#1a1a1a;">4</div>
<div class="r" style="left:589px;top:327.5px;width:207.5px;height:13px;background:#ffffff;border-bottom:1px solid #e4e4e4;box-sizing:border-box;"></div>
<div class="r" style="left:696.5px;top:327.5px;width:1px;height:13px;background:#e4e4e4;"></div>
<div class="t" style="left:591.20px;top:331.02px;font-size:7.3px;line-height:7.3px;color:#1a1a1a;">awo</div>
<div class="t" style="left:698.80px;top:330.87px;font-size:7px;line-height:7px;color:#9a9a9a;">[mm]</div>
<div class="t" style="right:238.00px;top:331.02px;font-size:7.3px;line-height:7.3px;color:#1a1a1a;">4</div>
<div class="r" style="left:589px;top:340.5px;width:207.5px;height:15.3px;background:#e3e3e3;border-top:1px solid #f6f6f6;box-sizing:border-box;"></div>
<div class="t" style="left:591.50px;top:345.03px;font-size:7.7px;line-height:7.7px;color:#4e4e52;">Schrauben</div>
<svg class="s" style="left:784.5px;top:343.65px;" width="10" height="10" viewBox="0 0 10 10"><circle cx="5" cy="5" r="4.4" fill="#98a6dc"/><path d="M3 5l2-2 2 2M3 7.5l2-2 2 2" stroke="#fff" stroke-width="1" fill="none"/></svg>
<div class="r" style="left:589px;top:355.8px;width:207.5px;height:13px;background:#ffffff;border-bottom:1px solid #e4e4e4;box-sizing:border-box;"></div>
<div class="r" style="left:696.5px;top:355.8px;width:1px;height:13px;background:#e4e4e4;"></div>
<div class="t" style="left:591.20px;top:359.32px;font-size:7.3px;line-height:7.3px;color:#1a1a1a;">Anzahl</div>
<div class="t" style="right:238.00px;top:359.32px;font-size:7.3px;line-height:7.3px;color:#1a1a1a;">12</div>
<div class="r" style="left:589px;top:362px;width:230px;height:10px;background:#f0f0f0;"></div>
<div class="r" style="left:586px;top:361.6px;width:422px;height:37.9px;background:#f0f0f0;"></div>
<div class="r" style="left:800px;top:176px;width:11px;height:186px;background:#f0f0f0;"></div>
<div class="r" style="left:803.8px;top:189.5px;width:3px;height:113.5px;background:#8a8a8a;border-radius:1.5px;"></div>
<div class="r" style="left:813px;top:173px;width:196px;height:189px;background:#fdfdfd;"></div>
<div class="r" style="left:818px;top:179px;width:186.5px;height:179px;background:#ffffff;border-left:1.5px solid #888;border-top:2px solid #a6a6a6;border-right:1px solid #e0e0e0;border-bottom:1px solid #e0e0e0;box-sizing:border-box;"></div>
<svg class="s" style="left:0;top:0" width="1032" height="585" viewBox="0 0 1032 585"><circle cx="887.8" cy="268.9" r="57.6" fill="#d6d6d6" stroke="#555" stroke-width="0.8"/><circle cx="887.8" cy="268.9" r="44.3" fill="#ffffff" stroke="#333" stroke-width="1.8"/><circle cx="938.6" cy="268.9" r="3.1" fill="#2a2a2a"/><circle cx="938.9" cy="268.7" r="0.9" fill="#c8c8c8"/><circle cx="931.8" cy="294.3" r="3.1" fill="#2a2a2a"/><circle cx="932.1" cy="294.1" r="0.9" fill="#c8c8c8"/><circle cx="913.2" cy="312.9" r="3.1" fill="#2a2a2a"/><circle cx="913.5" cy="312.7" r="0.9" fill="#c8c8c8"/><circle cx="887.8" cy="319.7" r="3.1" fill="#2a2a2a"/><circle cx="888.1" cy="319.5" r="0.9" fill="#c8c8c8"/><circle cx="862.4" cy="312.9" r="3.1" fill="#2a2a2a"/><circle cx="862.7" cy="312.7" r="0.9" fill="#c8c8c8"/><circle cx="843.8" cy="294.3" r="3.1" fill="#2a2a2a"/><circle cx="844.1" cy="294.1" r="0.9" fill="#c8c8c8"/><circle cx="837.0" cy="268.9" r="3.1" fill="#2a2a2a"/><circle cx="837.3" cy="268.7" r="0.9" fill="#c8c8c8"/><circle cx="843.8" cy="243.5" r="3.1" fill="#2a2a2a"/><circle cx="844.1" cy="243.3" r="0.9" fill="#c8c8c8"/><circle cx="862.4" cy="224.9" r="3.1" fill="#2a2a2a"/><circle cx="862.7" cy="224.7" r="0.9" fill="#c8c8c8"/><circle cx="887.8" cy="218.1" r="3.1" fill="#2a2a2a"/><circle cx="888.1" cy="217.9" r="0.9" fill="#c8c8c8"/><circle cx="913.2" cy="224.9" r="3.1" fill="#2a2a2a"/><circle cx="913.5" cy="224.7" r="0.9" fill="#c8c8c8"/><circle cx="931.8" cy="243.5" r="3.1" fill="#2a2a2a"/><circle cx="932.1" cy="243.3" r="0.9" fill="#c8c8c8"/><path d="M985.4 205V329M960 211.1H992M960 325.3H992M971.8 205V222M971.8 318V329M960 217.8H975M960 319H975" stroke="#555" stroke-width="0.8" fill="none"/><path d="M983 208.6l5 5M969.4 215.3l5 5M983 322.8l5 5M969.4 316.5l5 5" stroke="#555" stroke-width="0.7"/><text x="0" y="0" transform="translate(971,219.8) rotate(-90)" font-family="Liberation Sans" font-size="8.6" fill="#333">40</text><text x="0" y="0" transform="translate(971,326.5) rotate(-90)" font-family="Liberation Sans" font-size="8.6" fill="#333">40</text><text x="0" y="0" transform="translate(983.4,277) rotate(-90)" font-family="Liberation Sans" font-size="9.2" fill="#333">648</text></svg>
<div class="r" style="left:860.2px;top:403.8px;width:69.8px;height:14.5px;background:#fdfdfd;border-radius:2px;"></div>
<div class="r" style="left:936px;top:403.8px;width:69.6px;height:14.5px;background:#fdfdfd;border-radius:2px;"></div>
<div class="t" style="left:890.00px;top:408.15px;font-size:7.5px;line-height:7.5px;color:#1a1a1a;">OK</div>
<div class="t" style="left:952.40px;top:408.24px;font-size:7.4px;line-height:7.4px;color:#1a1a1a;">Abbrechen</div>
</body></html>
